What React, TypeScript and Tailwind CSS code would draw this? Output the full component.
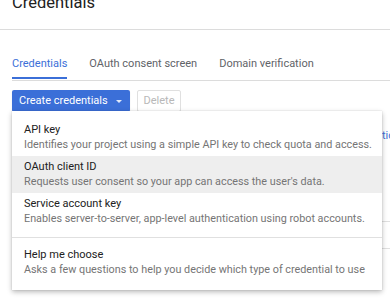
import React from "react";

const items = [
  { t: "API key", d: "Identifies your project using a simple API key to check quota and access." },
  { t: "OAuth client ID", d: "Requests user consent so your app can access the user's data.", active: true },
  { t: "Service account key", d: "Enables server-to-server, app-level authentication using robot accounts." },
];

export default function App() {
  return (
    <div
      className="relative w-[390px] h-[298px] overflow-hidden bg-white"
      style={{ fontFamily: "Roboto, 'Liberation Sans', sans-serif" }}
    >
      <div className="h-[35px] border-b border-[#dcdcdc] pl-[12px]">
        <div className="mt-[-5px] text-[16.5px] leading-[16.5px] text-[#212121]">Credentials</div>
      </div>

      <div className="pl-[12px] pt-[27px]">
        <div className="flex gap-[22px] text-[11px] leading-[14px]">
          <div className="pb-[6px] border-b-2 border-[#3b6fd8] text-[#3b6fd8]">Credentials</div>
          <div className="pb-[6px] text-[#5f6368]">OAuth consent screen</div>
          <div className="pb-[6px] text-[#5f6368]">Domain verification</div>
        </div>
        <div className="mt-[1px] h-px bg-[#dcdcdc]" />

        <div className="mt-[9px] flex gap-[7px]">
          <div className="flex h-[22px] w-[118px] items-center rounded-[2px] bg-[#3b6fd8] pl-[7px] text-[11px] text-white shadow-[0_1px_1px_rgba(0,0,0,0.2)]">
            <span>Create credentials</span>
            <svg width="6" height="3" viewBox="0 0 6 3" className="ml-[8px]">
              <path d="M0 0 L6 0 L3 3 Z" fill="#ffffff" fillOpacity="0.85" />
            </svg>
          </div>
          <div className="flex h-[22px] w-[44px] items-center justify-center rounded-[2px] border border-[#e0e0e0] text-[11px] text-[#b8b8b8]">
            Delete
          </div>
        </div>

        <div className="mt-[16px] whitespace-nowrap pl-[357px] text-[11px] text-[#3b6fd8]">Actions</div>
        <div className="mt-[76px] h-px bg-[#e0e0e0] ml-[40px]" />
        <div className="mt-[26px] h-px bg-[#e0e0e0] ml-[40px]" />
      </div>

      <div className="absolute left-[12px] top-[111px] w-[370px] bg-white py-[8px] shadow-[0_2px_5px_rgba(0,0,0,0.28),0_0_1px_rgba(0,0,0,0.2)]">
        {items.map((it) => (
          <div
            key={it.t}
            className={`h-[37px] pl-[12px] pt-[3px] ${it.active ? "bg-[#eeeeee]" : ""}`}
          >
            <div className="text-[11px] leading-[15px] text-[#212121]">{it.t}</div>
            <div className="text-[10.8px] leading-[15px] text-[#757575]">{it.d}</div>
          </div>
        ))}
        <div className="my-[7px] h-px bg-[#e0e0e0]" />
        <div className="h-[37px] pl-[12px] pt-[2px]">
          <div className="text-[11px] leading-[15px] text-[#212121]">Help me choose</div>
          <div className="text-[10.8px] leading-[15px] text-[#757575]">
            Asks a few questions to help you decide which type of credential to use
          </div>
        </div>
      </div>
    </div>
  );
}
